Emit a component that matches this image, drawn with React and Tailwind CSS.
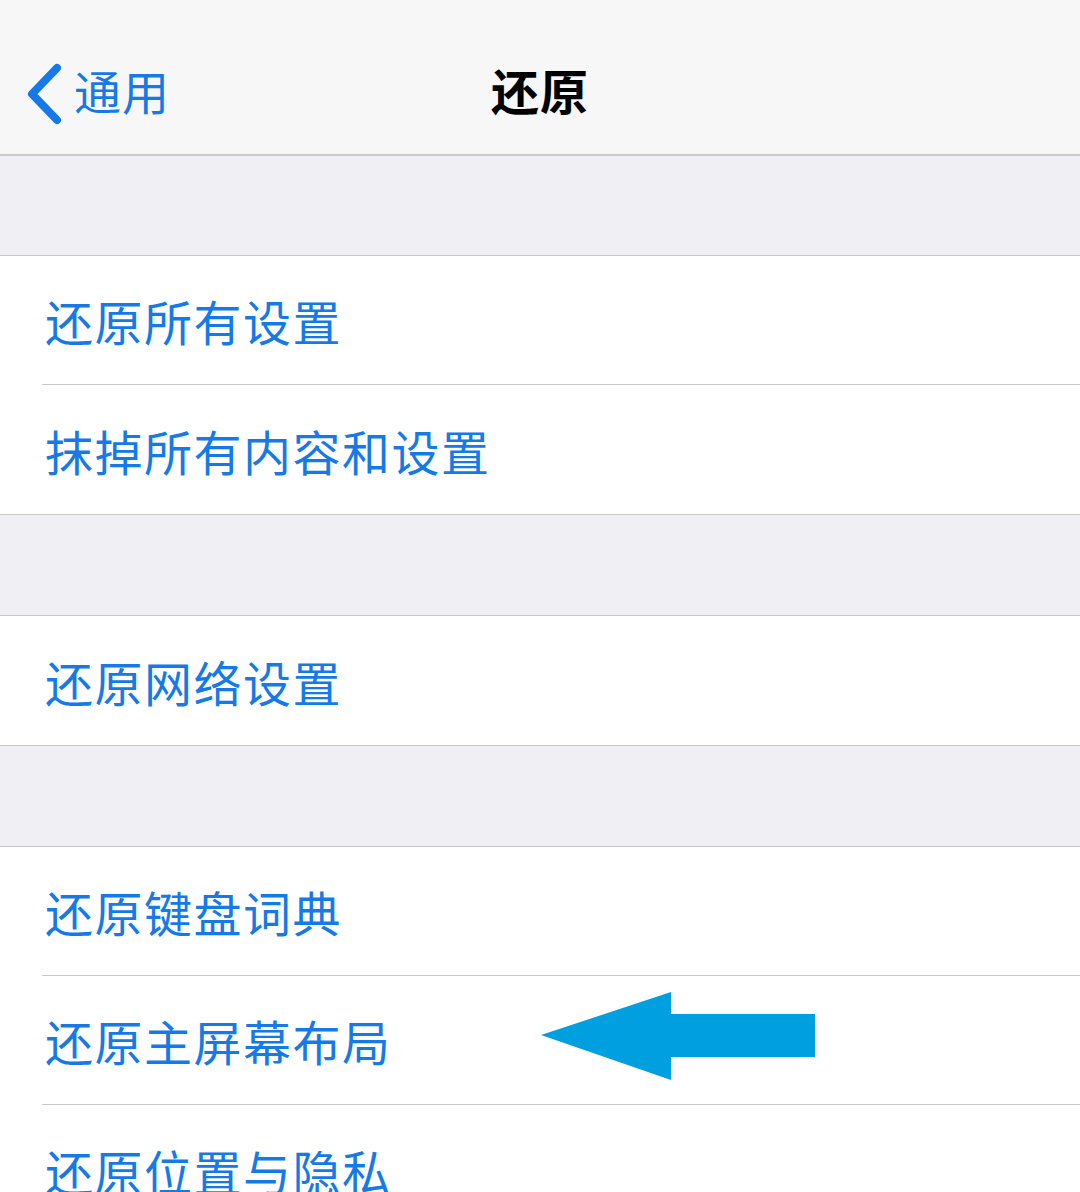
import React from 'react';

const font = { fontFamily: '"Noto Sans CJK SC", "Noto Sans", sans-serif' };

function Row({ label, divider, children }) {
  return (
    <div className="relative bg-white pl-[42px]">
      <div className={`h-[129px] flex items-center pl-[3px] ${divider ? 'border-b border-[#c8c7cc]' : ''}`}>
        <span className="text-[48px] leading-none text-[#157ae8] tracking-[1.5px]">{label}</span>
      </div>
      {children}
    </div>
  );
}

function Group({ children }) {
  return <div className="border-y border-[#c8c7cc] bg-white">{children}</div>;
}

export default function App() {
  return (
    <div className="w-[1080px] h-[1192px] overflow-hidden bg-[#efeff4]" style={font}>
      <div className="h-[156px] bg-[#f7f7f8] border-b-2 border-[#c9c9ce] relative flex items-center justify-center">
        <div className="absolute left-[24px] top-[62px] flex items-center">
          <svg width="40" height="64" viewBox="0 0 40 64" className="mr-[10px]">
            <path d="M33 6 L8 32 L33 58" fill="none" stroke="#157ae8" strokeWidth="8" strokeLinecap="round" strokeLinejoin="round" />
          </svg>
          <span className="text-[47px] leading-none text-[#157ae8] pb-[10px] tracking-[1px]">通用</span>
        </div>
        <span className="text-[48px] leading-none font-bold text-black mt-[24px] tracking-[1px]">还原</span>
      </div>

      <div className="h-[99px]" />
      <Group>
        <Row label="还原所有设置" divider />
        <Row label="抹掉所有内容和设置" />
      </Group>

      <div className="h-[100px]" />
      <Group>
        <Row label="还原网络设置" />
      </Group>

      <div className="h-[100px]" />
      <Group>
        <Row label="还原键盘词典" divider />
        <Row label="还原主屏幕布局" divider>
          <svg className="absolute left-[541px] top-[16px]" width="275" height="90" viewBox="0 0 275 90">
            <polygon points="0,43 130,0 130,22 274,22 274,65 130,65 130,88" fill="#009fe0" />
          </svg>
        </Row>
        <Row label="还原位置与隐私" />
      </Group>
    </div>
  );
}
